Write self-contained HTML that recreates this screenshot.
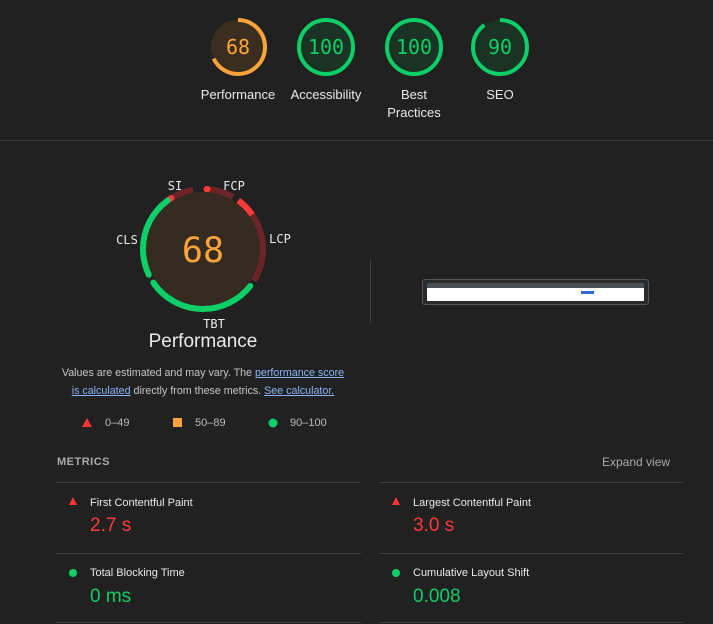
<!DOCTYPE html>
<html><head><meta charset="utf-8"><style>
body{margin:0;width:713px;height:624px;background:#212121;font-family:"Liberation Sans",Arial,sans-serif;color:#e8eaed;position:relative;overflow:hidden}
.a{position:absolute}
.lbl{font-size:13px;text-align:center;width:100px;line-height:18px}
.mono{font-family:"DejaVu Sans Mono","Liberation Mono",monospace}
.line{position:absolute;height:1px;background:#3c3c3c}
.mt{font-size:11px;color:#e8eaed}
.mv{font-size:19px}
</style></head><body>
<svg class="a" style="left:0;top:0" width="713" height="140">
 <g transform="translate(238,47)"><circle r="27" fill="#3a2e20"/><circle r="27" fill="none" stroke="#ffa33a" stroke-width="4" stroke-dasharray="115 200" transform="rotate(-90)"/></g>
 <g transform="translate(326,47)"><circle r="27" fill="#1b3324" stroke="#0ccf67" stroke-width="4"/></g>
 <g transform="translate(414,47)"><circle r="27" fill="#1b3324" stroke="#0ccf67" stroke-width="4"/></g>
 <g transform="translate(500,47)"><circle r="27" fill="#1b3324"/><circle r="27" fill="none" stroke="#0ccf67" stroke-width="4" stroke-dasharray="152.7 200" transform="rotate(-90)"/></g>
 <g class="mono" font-size="20" text-anchor="middle"><text x="238" y="54" fill="#ffa33a">68</text><text x="326" y="54" fill="#0ccf67">100</text><text x="414" y="54" fill="#0ccf67">100</text><text x="500" y="54" fill="#0ccf67">90</text></g>
</svg>
<div class="a lbl" style="left:188px;top:86px">Performance</div>
<div class="a lbl" style="left:276px;top:86px">Accessibility</div>
<div class="a lbl" style="left:364px;top:86px">Best<br>Practices</div>
<div class="a lbl" style="left:450px;top:86px">SEO</div>
<div class="line" style="left:0;top:140px;width:713px;background:#3a3a3a"></div>

<svg class="a" style="left:0;top:170px" width="360" height="170">
 <g transform="translate(203,79)">
  <circle r="57" fill="#362b20"/>
  <g fill="none" stroke-width="6" transform="rotate(-90)">
   <circle r="60" stroke="#6b2528" stroke-dasharray="27.2 500" stroke-dashoffset="-339.6"/>
   <circle r="60" stroke="#ff3a3a" stroke-linecap="round" stroke-dasharray="3 500" stroke-dashoffset="-340.5"/>
   <circle r="60" stroke="#6b2528" stroke-dasharray="29.3 500" stroke-dashoffset="-2"/>
   <circle r="60" stroke="#ff3a3a" stroke-linecap="round" stroke-dasharray="1 500" stroke-dashoffset="-3.5"/>
   <circle r="60" stroke="#6b2528" stroke-dasharray="90 500" stroke-dashoffset="-37.7"/>
   <circle r="60" stroke="#ff3a3a" stroke-dasharray="20 500" stroke-dashoffset="-37.7"/>
   <circle r="60" stroke="#0ccf67" stroke-linecap="round" stroke-dasharray="113 500" stroke-dashoffset="-134"/>
   <circle r="60" stroke="#0ccf67" stroke-linecap="round" stroke-dasharray="83 500" stroke-dashoffset="-256"/>
  </g>
  <text class="mono" y="13" font-size="35" text-anchor="middle" fill="#ffa33a">68</text>
 </g>
 <g class="mono" font-size="12" fill="#e8eaed" text-anchor="middle">
  <text x="175" y="20">SI</text><text x="234" y="20">FCP</text><text x="280" y="73">LCP</text><text x="127" y="74">CLS</text><text x="214" y="158">TBT</text>
 </g>
</svg>
<div class="a" style="left:103px;top:331px;width:200px;text-align:center;font-size:19px">Performance</div>
<div class="a" style="left:370px;top:260px;width:1px;height:63px;background:#444"></div>
<div class="a" style="left:422px;top:279px;width:225px;height:24px;border:1px solid #555;border-radius:3px;background:#2a2a2a">
 <div class="a" style="left:4px;top:3px;width:217px;height:5px;background:#4a4f55"></div>
 <div class="a" style="left:4px;top:8px;width:217px;height:13px;background:#fff"></div>
 <div class="a" style="left:158px;top:11px;width:13px;height:3px;background:#2b6fd0"></div>
</div>
<div class="a" style="left:60px;top:364px;width:286px;text-align:center;font-size:10.7px;line-height:18px;color:#c4c7c5">Values are estimated and may vary. The <span style="color:#8ab4f8;text-decoration:underline">performance score</span> <span style="color:#8ab4f8;text-decoration:underline">is calculated</span> directly from these metrics. <span style="color:#8ab4f8;text-decoration:underline">See calculator.</span></div>
<svg class="a" style="left:80px;top:416px" width="200" height="14"><polygon points="7,2 12,11 2,11" fill="#ff3333"/><rect x="93" y="2" width="9" height="9" fill="#ffa33a"/><circle cx="193" cy="7" r="4.5" fill="#0ccf67"/></svg>
<div class="a" style="left:105px;top:417px;font-size:11px;color:#bbb">0–49</div>
<div class="a" style="left:195px;top:417px;font-size:11px;color:#bbb">50–89</div>
<div class="a" style="left:290px;top:417px;font-size:11px;color:#bbb">90–100</div>
<div class="a" style="left:57px;top:456px;font-size:11px;font-weight:bold;color:#aaa;letter-spacing:.5px">METRICS</div>
<div class="a" style="left:602px;top:455px;font-size:12px;color:#aaa">Expand view</div>
<div class="line" style="left:56px;top:482px;width:305px"></div><div class="line" style="left:379px;top:482px;width:304px"></div>
<div class="line" style="left:56px;top:553px;width:305px"></div><div class="line" style="left:379px;top:553px;width:304px"></div>
<div class="line" style="left:56px;top:622px;width:305px"></div><div class="line" style="left:379px;top:622px;width:304px"></div>
<svg class="a" style="left:66px;top:496px" width="340" height="90"><polygon points="7,1 11,9 3,9" fill="#ff3333"/><polygon points="330,1 334,9 326,9" fill="#ff3333"/><circle cx="7" cy="77" r="4" fill="#0ccf67"/><circle cx="330" cy="77" r="4" fill="#0ccf67"/></svg>
<div class="a mt" style="left:90px;top:497px">First Contentful Paint</div>
<div class="a mv" style="left:90px;top:515px;color:#ff3a3a">2.7 s</div>
<div class="a mt" style="left:413px;top:497px">Largest Contentful Paint</div>
<div class="a mv" style="left:413px;top:515px;color:#ff3a3a">3.0 s</div>
<div class="a mt" style="left:90px;top:567px">Total Blocking Time</div>
<div class="a mv" style="left:90px;top:586px;color:#0ccf67">0 ms</div>
<div class="a mt" style="left:413px;top:567px">Cumulative Layout Shift</div>
<div class="a mv" style="left:413px;top:586px;color:#0ccf67">0.008</div>
</body></html>
